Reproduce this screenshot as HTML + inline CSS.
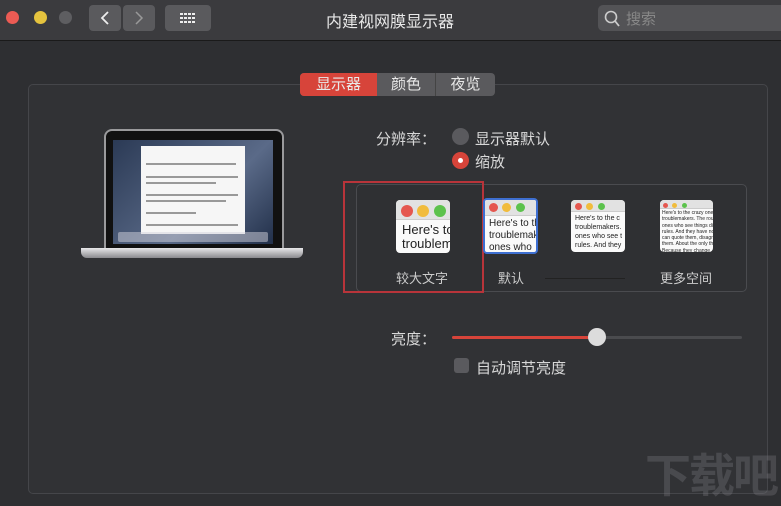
<html><head><style>
html,body{margin:0;width:781px;height:506px;overflow:hidden}
body{background:#2e2f32;font-family:"Liberation Sans","Noto Sans CJK SC",sans-serif;position:relative;color:#d8d8d8}
.a{position:absolute}
.tb{left:0;top:0;width:781px;height:40px;background:#3b3b3e;border-bottom:1px solid #1a1a1a}
.dot{width:13px;height:13px;border-radius:50%;top:11px}
.btn{background:#5a5a5d;border-radius:4px;height:26px;top:5px}
.panel{left:28px;top:84px;width:738px;height:408px;border:1px solid #45464a;border-radius:5px;background:#313235}
.tab{top:73px;height:23px;font-size:15px;line-height:23px;text-align:center;color:#e8e8e8}
.thumb{background:#fafafa;border-radius:4px;overflow:hidden}
.thumb .bar{background:#e2e2e2;border-bottom:1px solid #ccc;white-space:nowrap}
.c{border-radius:50%;display:inline-block}
.thumb p{margin:0;color:#222;white-space:nowrap}
.ln{position:absolute;left:146px;height:2px;background:#999}
</style></head><body>
<div class="a tb"></div>
<div class="a dot" style="left:6px;background:#ec5b54"></div>
<div class="a dot" style="left:34px;background:#e5c33e"></div>
<div class="a dot" style="left:59px;background:#5e5e61"></div>
<div class="a btn" style="left:89px;width:32px"></div>
<div class="a btn" style="left:123px;width:32px"></div>
<svg class="a" style="left:89px;top:5px" width="66" height="26"><path d="M19 7 L13 13 L19 19" fill="none" stroke="#eee" stroke-width="1.8"/><path d="M47 7 L53 13 L47 19" fill="none" stroke="#999" stroke-width="1.5"/></svg>
<div class="a btn" style="left:165px;width:46px"></div>
<svg class="a" style="left:165px;top:5px" width="46" height="26"><g fill="#eee"><rect x="15" y="8" width="3" height="2"/><rect x="19" y="8" width="3" height="2"/><rect x="23" y="8" width="3" height="2"/><rect x="27" y="8" width="3" height="2"/><rect x="15" y="12" width="3" height="2"/><rect x="19" y="12" width="3" height="2"/><rect x="23" y="12" width="3" height="2"/><rect x="27" y="12" width="3" height="2"/><rect x="15" y="16" width="3" height="2"/><rect x="19" y="16" width="3" height="2"/><rect x="23" y="16" width="3" height="2"/><rect x="27" y="16" width="3" height="2"/></g></svg>
<div class="a" style="left:300px;top:8px;width:180px;text-align:center;font-size:16px;color:#e8e8e8">内建视网膜显示器</div>
<div class="a" style="left:598px;top:5px;width:190px;height:26px;background:#535356;border-radius:5px"></div>
<svg class="a" style="left:603px;top:9px" width="18" height="18"><circle cx="8" cy="8" r="5.5" fill="none" stroke="#ccc" stroke-width="1.6"/><line x1="12" y1="12" x2="16" y2="17" stroke="#ccc" stroke-width="1.8"/></svg>
<div class="a" style="left:626px;top:8px;font-size:15px;color:#888">搜索</div>
<div class="a panel"></div>
<div class="a" style="left:300px;top:73px;width:195px;height:23px;background:#5a5a5d;border-radius:4px"></div>
<div class="a tab" style="left:300px;width:77px;background:#d7443a;border-radius:4px 0 0 4px">显示器</div>
<div class="a tab" style="left:377px;width:58px;border-right:1px solid #444">颜色</div>
<div class="a tab" style="left:436px;width:59px">夜览</div>
<!-- laptop -->
<div class="a" style="left:104px;top:129px;width:176px;height:119px;background:#111;border:2px solid #9a9a9c;border-radius:8px 8px 0 0"></div>
<div class="a" style="left:113px;top:140px;width:160px;height:104px;background:linear-gradient(135deg,#2b3a55,#5a6a88 60%,#22304a)"></div>
<div class="a" style="left:141px;top:146px;width:104px;height:88px;background:#f6f6f6"></div>
<div class="ln" style="top:163px;width:90px"></div><div class="ln" style="top:176px;width:92px"></div><div class="ln" style="top:182px;width:70px"></div><div class="ln" style="top:194px;width:92px"></div><div class="ln" style="top:200px;width:80px"></div><div class="ln" style="top:212px;width:50px"></div><div class="ln" style="top:224px;width:92px"></div>
<div class="a" style="left:118px;top:232px;width:150px;height:10px;background:rgba(210,210,220,.5);border-radius:2px"></div>
<div class="a" style="left:81px;top:248px;width:222px;height:10px;background:linear-gradient(#e8e8ea,#8a8a8e);border-radius:0 0 6px 6px"></div>
<!-- resolution -->
<div class="a" style="left:376px;top:128px;font-size:15px">分辨率：</div>
<div class="a" style="left:452px;top:128px;width:17px;height:17px;border-radius:50%;background:#5a5a5e"></div>
<div class="a" style="left:475px;top:128px;font-size:15px">显示器默认</div>
<div class="a" style="left:452px;top:152px;width:17px;height:17px;border-radius:50%;background:#d7443a"></div>
<div class="a" style="left:458px;top:158px;width:5px;height:5px;border-radius:50%;background:#fff"></div>
<div class="a" style="left:475px;top:151px;font-size:15px">缩放</div>
<div class="a" style="left:356px;top:184px;width:389px;height:106px;border:1px solid #4a4b4f;border-radius:5px;background:#2f3033"></div>
<div class="a" style="left:343px;top:181px;width:137px;height:108px;border:2px solid #b8343a"></div>
<div class="a thumb" style="left:396px;top:200px;width:54px;height:53px"><div class="bar" style="height:20px;padding:5px 0 0 5px;box-sizing:border-box;line-height:12px"><span class="c" style="width:12px;height:12px;background:#e5574f"></span> <span class="c" style="width:12px;height:12px;background:#f1bc3c"></span> <span class="c" style="width:12px;height:12px;background:#5cc24c"></span></div><p style="font-size:13px;padding:3px 6px;line-height:14px">Here's to<br>troublem</p></div>
<div class="a thumb" style="left:483px;top:198px;width:55px;height:56px;border:2px solid #3e6fd1;box-sizing:border-box"><div class="bar" style="height:16px;padding:3px 0 0 4px;box-sizing:border-box;line-height:9px"><span class="c" style="width:9px;height:9px;background:#e5574f"></span> <span class="c" style="width:9px;height:9px;background:#f1bc3c"></span> <span class="c" style="width:9px;height:9px;background:#5cc24c"></span></div><p style="font-size:10px;padding:2px 4px;line-height:12px">Here's to th<br>troublemak<br>ones who</p></div>
<div class="a thumb" style="left:571px;top:200px;width:54px;height:52px"><div class="bar" style="height:12px;padding:2px 0 0 4px;box-sizing:border-box;line-height:7px"><span class="c" style="width:7px;height:7px;background:#e5574f"></span> <span class="c" style="width:7px;height:7px;background:#f1bc3c"></span> <span class="c" style="width:7px;height:7px;background:#5cc24c"></span></div><p style="font-size:7px;padding:2px 4px;line-height:9px">Here's to the c<br>troublemakers.<br>ones who see t<br>rules. And they</p></div>
<div class="a thumb" style="left:660px;top:200px;width:53px;height:52px"><div class="bar" style="height:9px;padding:1px 0 0 3px;box-sizing:border-box;line-height:5px"><span class="c" style="width:5px;height:5px;background:#e5574f"></span> <span class="c" style="width:5px;height:5px;background:#f1bc3c"></span> <span class="c" style="width:5px;height:5px;background:#5cc24c"></span></div><p style="font-size:5px;padding:1px 2px;line-height:6.3px">Here's to the crazy ones<br>troublemakers. The rou<br>ones who see things di<br>rules. And they have no<br>can quote them, disagre<br>them. About the only th<br>Because they change</p></div>
<div class="a" style="left:396px;top:268px;font-size:13px;color:#ccc">较大文字</div>
<div class="a" style="left:498px;top:268px;font-size:13px;color:#ccc">默认</div>
<div class="a" style="left:545px;top:278px;width:80px;height:1px;background:#222"></div>
<div class="a" style="left:660px;top:268px;font-size:13px;color:#ccc">更多空间</div>
<!-- brightness -->
<div class="a" style="left:391px;top:328px;font-size:15px">亮度：</div>
<div class="a" style="left:452px;top:336px;width:290px;height:3px;background:#4a4b4e;border-radius:2px"></div>
<div class="a" style="left:452px;top:336px;width:146px;height:3px;background:#d7443a;border-radius:2px"></div>
<div class="a" style="left:588px;top:328px;width:18px;height:18px;border-radius:50%;background:#dcdcdc"></div>
<div class="a" style="left:454px;top:358px;width:15px;height:15px;border-radius:3px;background:#5a5a5e"></div>
<div class="a" style="left:476px;top:357px;font-size:15px">自动调节亮度</div>
<div class="a" style="left:645px;top:440px;font-size:46px;font-weight:bold;color:rgba(120,120,125,.35);letter-spacing:-2px;white-space:nowrap">下载吧</div>
</body></html>
